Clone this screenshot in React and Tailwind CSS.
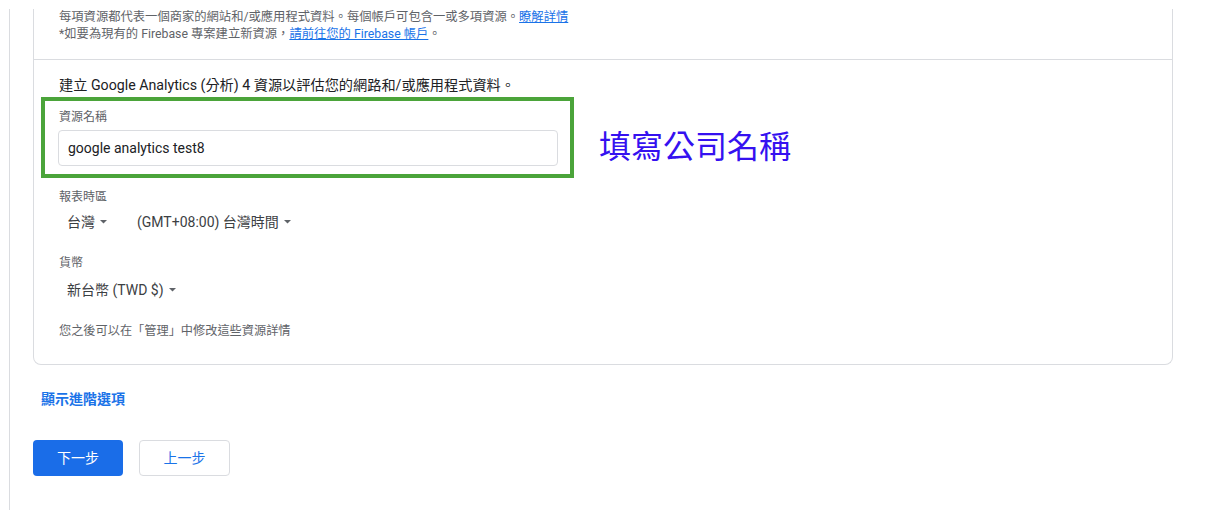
import React from 'react';

const Caret = () => (
  <svg width="7" height="4" viewBox="0 0 7 4" className="ml-[5px] inline-block">
    <polygon points="0,0 7,0 3.5,3.5" fill="#5f6368" />
  </svg>
);

const App = () => {
  return (
    <div className="w-[1218px] h-[510px] bg-white overflow-hidden font-['Roboto','Noto_Sans_CJK_TC',sans-serif] pt-[9px]">
      <div className="ml-[9px] h-[501px] border-l border-[#dadce0] pl-[23px]">
        <div className="w-[1140px] border-x border-b border-[#dadce0] rounded-b-lg">
          <div className="pl-[25px] pb-[16px] border-b border-[#dadce0] text-[12.3px] leading-[17px] text-[#5f6368]">
            <p>
              每項資源都代表一個商家的網站和/或應用程式資料。每個帳戶可包含一或多項資源。
              <a href="#" className="text-[#1a73e8] underline">瞭解詳情</a>
            </p>
            <p>
              *如要為現有的 Firebase 專案建立新資源，
              <a href="#" className="text-[#1a73e8] underline">請前往您的 Firebase 帳戶</a>
              。
            </p>
          </div>

          <div className="pl-[7px] pt-[15px] pb-[25px]">
            <p className="pl-[18px] text-[14.2px] leading-[20px] text-[#202124]">
              建立 Google Analytics (分析) 4 資源以評估您的網路和/或應用程式資料。
            </p>

            <div className="flex items-center mt-[2px]">
              <div className="w-[533px] border-[4px] border-[#4ba43a] pl-[13px] pt-[8px] pb-[8px]">
                <p className="pl-[1px] text-[12px] leading-[16px] text-[#5f6368]">資源名稱</p>
                <div className="mt-[5px] w-[500px] h-[36px] border border-[#dadce0] rounded flex items-center pl-[9px] text-[14px] text-[#202124]">
                  google analytics test8
                </div>
              </div>
              <span className="ml-[25px] mt-[13px] text-[32px] leading-[36px] text-[#3511f0] font-['Noto_Sans_CJK_TC',sans-serif]">
                填寫公司名稱
              </span>
            </div>

            <div className="pl-[18px]">
              <p className="mt-[11px] text-[12px] leading-[16px] text-[#5f6368]">報表時區</p>
              <div className="mt-[7px] pl-[8px] flex items-center text-[14px] leading-[20px] text-[#3c4043]">
                <span className="flex items-center">台灣<Caret /></span>
                <span className="ml-[30px] flex items-center">(GMT+08:00) 台灣時間<Caret /></span>
              </div>

              <p className="mt-[23px] text-[12px] leading-[16px] text-[#5f6368]">貨幣</p>
              <div className="mt-[9px] pl-[8px] flex items-center text-[14px] leading-[20px] text-[#3c4043]">
                <span className="flex items-center">新台幣 (TWD $)<Caret /></span>
              </div>

              <p className="mt-[23px] text-[12.2px] leading-[16px] text-[#5f6368]">
                您之後可以在「管理」中修改這些資源詳情
              </p>
            </div>
          </div>
        </div>

        <p className="mt-[25px] pl-[8px] text-[14px] leading-[18px] font-bold text-[#1a73e8]">顯示進階選項</p>

        <div className="mt-[32px] flex gap-[16px]">
          <button className="w-[90px] h-[36px] rounded bg-[#1a6de8] text-white text-[14px]">下一步</button>
          <button className="w-[91px] h-[36px] rounded border border-[#dadce0] bg-white text-[#1a73e8] text-[14px]">上一步</button>
        </div>
      </div>
    </div>
  );
};

export default App;
